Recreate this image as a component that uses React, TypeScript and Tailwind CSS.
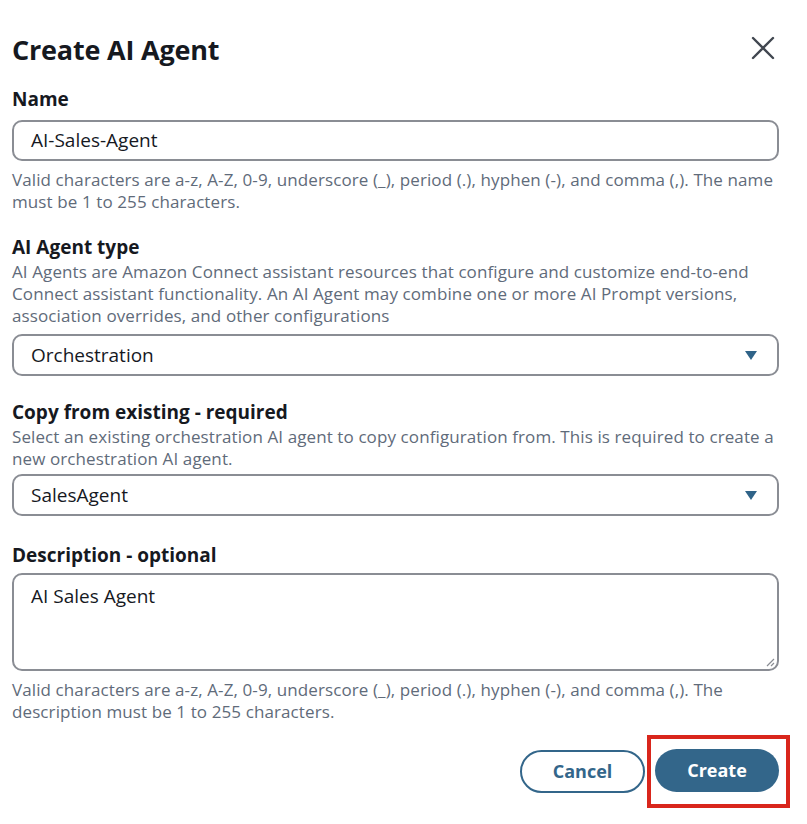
import React from 'react';

const font = {fontFamily: '"Open Sans", "Noto Sans", sans-serif'};

function Caret() {
  return (
    <svg width="14" height="11" viewBox="0 0 14 11" className="shrink-0">
      <path d="M1 1 L13 1 L7 10 Z" fill="#2f6388" />
    </svg>
  );
}

function SelectBox(props: {value: string}) {
  return (
    <div className="flex h-[42px] items-center justify-between rounded-[10px] border-2 border-[#8a8d94] pl-[17px] pr-[19px]">
      <span className="text-[19px] text-[#16191f]">{props.value}</span>
      <Caret />
    </div>
  );
}

function Label(props: React.PropsWithChildren<{className?: string}>) {
  return (
    <div className={'text-[19px] font-bold leading-[24px] text-[#16191f] ' + (props.className || '')}>
      {props.children}
    </div>
  );
}

function Help(props: React.PropsWithChildren<{className?: string}>) {
  return (
    <p className={'text-[17px] leading-[21.5px] tracking-[0.1px] text-[#5f6b7a] ' + (props.className || '')}>
      {props.children}
    </p>
  );
}

export default function App() {
  return (
    <div className="min-h-[824px] w-[807px] bg-white pl-[12px] pr-[28px] pt-[32px]" style={font}>
      <div className="flex items-start justify-between">
        <h1 className="text-[27px] font-bold leading-[36px] tracking-[-0.2px] text-[#16191f]">Create AI Agent</h1>
        <svg width="26" height="26" viewBox="0 0 26 26" className="mr-[3px] mt-[3px]">
          <path d="M3 3 L23 23 M23 3 L3 23" stroke="#414750" strokeWidth="2.4" strokeLinecap="round" />
        </svg>
      </div>

      <Label className="mt-[19px]">Name</Label>
      <div className="mt-[9px] flex h-[41px] items-center rounded-[10px] border-2 border-[#8a8d94] pl-[17px]">
        <span className="text-[19px] text-[#16191f]">AI-Sales-Agent</span>
      </div>
      <Help className="mt-[8px]">
        Valid characters are a-z, A-Z, 0-9, underscore (_), period (.), hyphen (-), and comma (,). The name must be 1 to 255 characters.
      </Help>

      <Label className="mt-[23px]">AI Agent type</Label>
      <Help className="mt-[2px] leading-[22px]">
        AI Agents are Amazon Connect assistant resources that configure and customize end-to-end Connect assistant functionality. An AI Agent may combine one or more AI Prompt versions, association overrides, and other configurations
      </Help>
      <div className="mt-[7px]">
        <SelectBox value="Orchestration" />
      </div>

      <Label className="mt-[24px]">Copy from existing - required</Label>
      <Help className="mt-[2px] leading-[22px]">
        Select an existing orchestration AI agent to copy configuration from. This is required to create a new orchestration AI agent.
      </Help>
      <div className="mt-[4px]">
        <SelectBox value="SalesAgent" />
      </div>

      <Label className="mt-[27px]">Description - optional</Label>
      <div className="relative mt-[6px] h-[98px] rounded-[10px] border-2 border-[#8a8d94] pl-[17px] pt-[7px]">
        <span className="text-[19px] text-[#16191f]">AI Sales Agent</span>
        <svg width="10" height="10" viewBox="0 0 10 10" className="absolute bottom-[2px] right-[2px]">
          <path d="M9 2 L2 9 M9 6 L6 9" stroke="#8a8d94" strokeWidth="1.2" />
        </svg>
      </div>
      <Help className="mt-[8px]">
        Valid characters are a-z, A-Z, 0-9, underscore (_), period (.), hyphen (-), and comma (,). The description must be 1 to 255 characters.
      </Help>

      <div className="mt-[13px] flex items-center justify-end">
        <button className="h-[43px] w-[125px] rounded-full border-2 border-[#33668a] bg-white text-[18px] font-bold text-[#33668a]">
          Cancel
        </button>
        <div className="-mr-[11px] ml-[2px] border-4 border-[#d9261c] pb-[12px] pl-[4px] pr-[7px] pt-[10px]">
          <button className="h-[43px] w-[124px] rounded-full bg-[#33668a] text-[18px] font-bold text-white">
            Create
          </button>
        </div>
      </div>
    </div>
  );
}
